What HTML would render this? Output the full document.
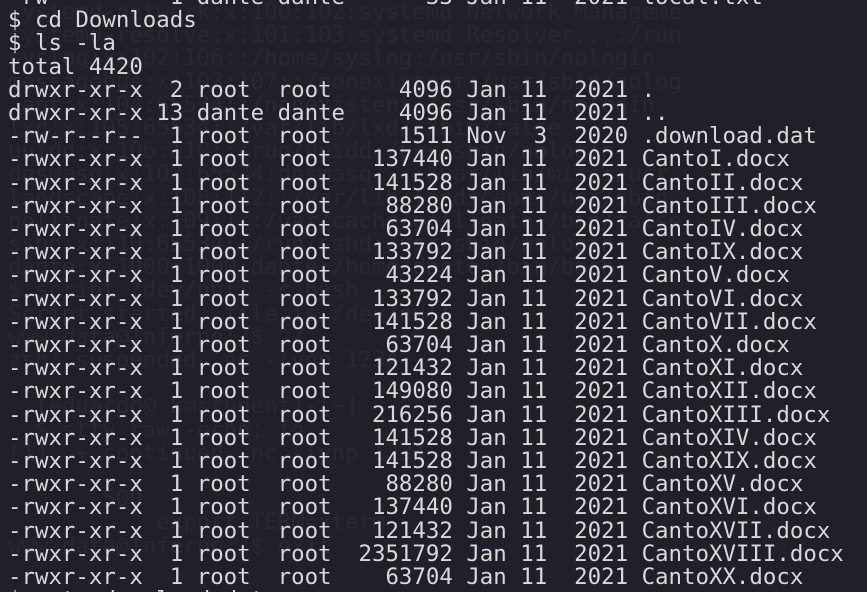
<!DOCTYPE html>
<html><head><meta charset="utf-8"><style>
html,body{margin:0;padding:0;background:#1f2029;width:867px;height:592px;overflow:hidden;position:relative}
pre{margin:0;position:absolute;left:8px;font-family:"DejaVu Sans Mono","Liberation Mono",monospace;font-size:22.4px;line-height:23.2px;white-space:pre;max-width:859px;overflow:hidden}
#wm{top:1px;color:#272935}
#t{top:-14px;color:#d9d9d9}
</style></head><body>
<pre id="wm">
systemd-network:x:100:102:systemd Network Manageme
systemd-resolve:x:101:103:systemd Resolver,,,:/run
syslog:x:102:106::/home/syslog:/usr/sbin/nologin
messagebus:x:103:107::/nonexistent:/usr/sbin/nolog
_apt:x:104:65534::/nonexistent:/usr/sbin/nologin
lxd:x:105:65534::/var/lib/lxd/:/bin/false
uuidd:x:106:110::/run/uuidd:/usr/sbin/nologin
dnsmasq:x:107:65534:dnsmasq,,,:/var/lib/misc:/usr
landscape:x:108:112::/var/lib/landscape:/usr/sbin
pollinate:x:109:1::/var/cache/pollinate:/bin/false
sshd:x:110:65534::/run/sshd:/usr/sbin/nologin
dante:x:1000:1000:dante:/home/dante:/bin/bash
$ script /dev/null -c bash
Script started, file is /dev/null
www-data@Inferno:/$ ^Z
zsh: suspended  nc -lvnp 1234

  (eduardo@ kmstudent)-[~]
  $ stty raw -echo; fg
[1]  + continued  nc -lvnp 1234

       500
           export TERM=xterm
www-data@Inferno:/$ exit</pre>
<pre id="t">-rw-------  1 dante dante      33 Jan 11  2021 local.txt
$ cd Downloads
$ ls -la
total 4420
drwxr-xr-x  2 root  root     4096 Jan 11  2021 .
drwxr-xr-x 13 dante dante    4096 Jan 11  2021 ..
-rw-r--r--  1 root  root     1511 Nov  3  2020 .download.dat
-rwxr-xr-x  1 root  root   137440 Jan 11  2021 CantoI.docx
-rwxr-xr-x  1 root  root   141528 Jan 11  2021 CantoII.docx
-rwxr-xr-x  1 root  root    88280 Jan 11  2021 CantoIII.docx
-rwxr-xr-x  1 root  root    63704 Jan 11  2021 CantoIV.docx
-rwxr-xr-x  1 root  root   133792 Jan 11  2021 CantoIX.docx
-rwxr-xr-x  1 root  root    43224 Jan 11  2021 CantoV.docx
-rwxr-xr-x  1 root  root   133792 Jan 11  2021 CantoVI.docx
-rwxr-xr-x  1 root  root   141528 Jan 11  2021 CantoVII.docx
-rwxr-xr-x  1 root  root    63704 Jan 11  2021 CantoX.docx
-rwxr-xr-x  1 root  root   121432 Jan 11  2021 CantoXI.docx
-rwxr-xr-x  1 root  root   149080 Jan 11  2021 CantoXII.docx
-rwxr-xr-x  1 root  root   216256 Jan 11  2021 CantoXIII.docx
-rwxr-xr-x  1 root  root   141528 Jan 11  2021 CantoXIV.docx
-rwxr-xr-x  1 root  root   141528 Jan 11  2021 CantoXIX.docx
-rwxr-xr-x  1 root  root    88280 Jan 11  2021 CantoXV.docx
-rwxr-xr-x  1 root  root   137440 Jan 11  2021 CantoXVI.docx
-rwxr-xr-x  1 root  root   121432 Jan 11  2021 CantoXVII.docx
-rwxr-xr-x  1 root  root  2351792 Jan 11  2021 CantoXVIII.docx
-rwxr-xr-x  1 root  root    63704 Jan 11  2021 CantoXX.docx
$ cat .download.dat</pre>
</body></html>
